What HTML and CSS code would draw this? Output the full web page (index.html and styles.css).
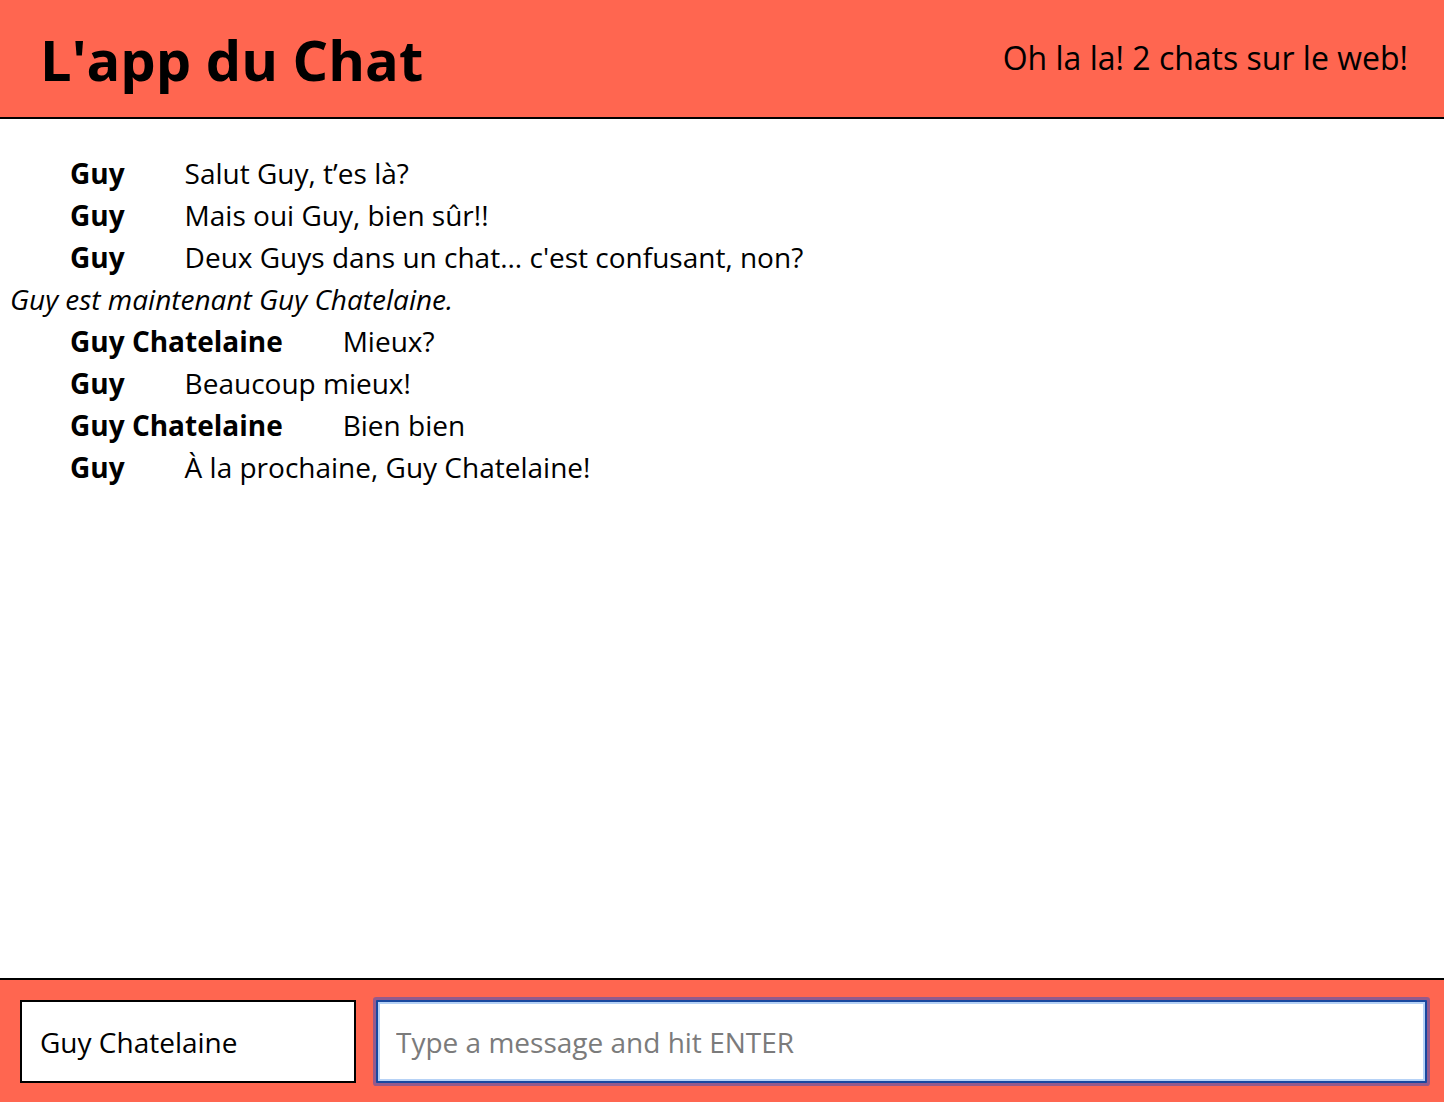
FILE: index.html
```html
<!DOCTYPE html>
<html lang="fr">
<head>
<meta charset="utf-8">
<title>L'app du Chat</title>
<link rel="stylesheet" href="styles.css">
</head>
<body>
<div class="app">
  <header class="topbar">
    <h1 class="title">L'app du Chat</h1>
    <div class="status">Oh la la! 2 chats sur le web!</div>
  </header>
  <main class="messages">
    <div class="msg"><span class="name">Guy</span><span class="text">Salut Guy, t’es là?</span></div>
    <div class="msg"><span class="name">Guy</span><span class="text">Mais oui Guy, bien sûr!!</span></div>
    <div class="msg"><span class="name">Guy</span><span class="text">Deux Guys dans un chat... c'est confusant, non?</span></div>
    <div class="notice">Guy est maintenant Guy Chatelaine.</div>
    <div class="msg"><span class="name">Guy Chatelaine</span><span class="text">Mieux?</span></div>
    <div class="msg"><span class="name">Guy</span><span class="text">Beaucoup mieux!</span></div>
    <div class="msg"><span class="name">Guy Chatelaine</span><span class="text">Bien bien</span></div>
    <div class="msg"><span class="name">Guy</span><span class="text">À la prochaine, Guy Chatelaine!</span></div>
  </main>
  <footer class="composer">
    <input class="nick" type="text" value="Guy Chatelaine">
    <input class="entry" type="text" placeholder="Type a message and hit ENTER">
  </footer>
</div>
</body>
</html>
```

FILE: styles.css
```css
html, body {
  margin: 0;
  padding: 0;
  height: 100%;
}
body {
  font-family: "Open Sans", "Liberation Sans", sans-serif;
  color: #000;
  background: #fff;
}
.app {
  display: flex;
  flex-direction: column;
  height: 100vh;
}
.topbar {
  flex: 0 0 auto;
  height: 117px;
  background: #ff6650;
  border-bottom: 2px solid #000;
  display: flex;
  align-items: center;
  justify-content: space-between;
  padding: 0 36px 0 40px;
}
.title {
  margin: 0;
  font-size: 56px;
  font-weight: 700;
  line-height: 1;
}
.status {
  font-size: 32px;
  line-height: 1;
  position: relative;
  top: -1px;
}
.messages {
  flex: 1 1 auto;
  padding: 33px 10px 0 10px;
  font-size: 28px;
  line-height: 42px;
}
.msg {
  padding-left: 60px;
}
.name {
  font-weight: 700;
  margin-right: 60px;
}
.notice {
  font-style: italic;
}
.composer {
  flex: 0 0 auto;
  height: 124px;
  box-sizing: border-box;
  background: #ff6650;
  border-top: 2px solid #000;
  display: flex;
  align-items: flex-start;
  gap: 20px;
  padding: 20px 17px 0 20px;
}
.composer input {
  font-family: "Open Sans", "Liberation Sans", sans-serif;
  font-size: 28px;
  height: 83px;
  box-sizing: border-box;
  margin: 0;
  padding: 0 18px;
  background: #fff;
  color: #000;
  outline: none;
}
.nick {
  width: 336px;
  border: 2px solid #000;
}
.entry {
  flex: 1 1 auto;
  border: 2px solid #1848a0;
  box-shadow: inset 0 0 0 2px #b6d2f6, 0 0 0 3px rgba(60, 80, 190, 0.55);
  border-radius: 1px;
}
.entry::placeholder {
  color: #7b7b7b;
}
```
